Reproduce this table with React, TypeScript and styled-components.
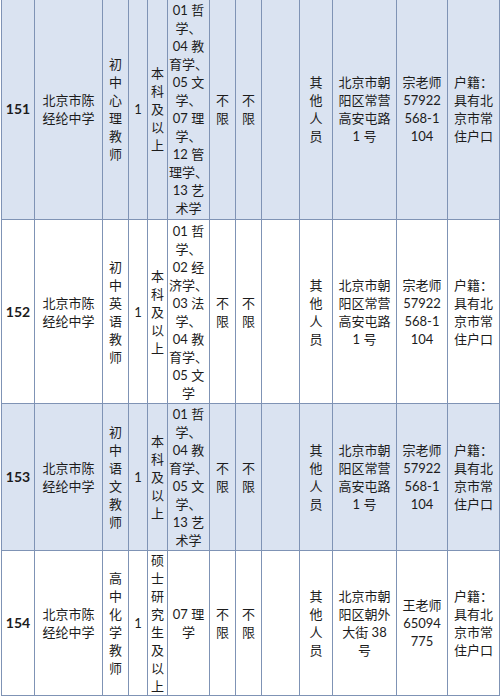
import React from 'react'
import styled, { createGlobalStyle } from 'styled-components'

const GlobalStyle = createGlobalStyle`
    html, body {
        margin: 0;
        padding: 0;
        background: #ffffff;
    }
`

interface RowData {
    no: string
    unit: string[]
    post: string
    count: string
    edu: string
    major: string[]
    address: string[]
    contact: string[]
    height: number
}

const rows: RowData[] = [
    {
        no: '151',
        unit: ['北京市陈', '经纶中学'],
        post: '初中心理教师',
        count: '1',
        edu: '本科及以上',
        major: ['01 哲', '学、', '04 教', '育学、', '05 文', '学、', '07 理', '学、', '12 管', '理学、', '13 艺', '术学'],
        address: ['北京市朝', '阳区常营', '高安屯路', '1 号'],
        contact: ['宗老师', '57922', '568-1', '104'],
        height: 221,
    },
    {
        no: '152',
        unit: ['北京市陈', '经纶中学'],
        post: '初中英语教师',
        count: '1',
        edu: '本科及以上',
        major: ['01 哲', '学、', '02 经', '济学、', '03 法', '学、', '04 教', '育学、', '05 文', '学'],
        address: ['北京市朝', '阳区常营', '高安屯路', '1 号'],
        contact: ['宗老师', '57922', '568-1', '104'],
        height: 184,
    },
    {
        no: '153',
        unit: ['北京市陈', '经纶中学'],
        post: '初中语文教师',
        count: '1',
        edu: '本科及以上',
        major: ['01 哲', '学、', '04 教', '育学、', '05 文', '学、', '13 艺', '术学'],
        address: ['北京市朝', '阳区常营', '高安屯路', '1 号'],
        contact: ['宗老师', '57922', '568-1', '104'],
        height: 147,
    },
    {
        no: '154',
        unit: ['北京市陈', '经纶中学'],
        post: '高中化学教师',
        count: '1',
        edu: '硕士研究生及以上',
        major: ['07 理', '学'],
        address: ['北京市朝', '阳区朝外', '大街 38', '号'],
        contact: ['王老师', '65094', '775'],
        height: 144,
    },
]

const widths = [33, 68, 26, 19, 20, 42, 26, 26, 38, 33, 64, 51, 52]

const Lines: React.FC<{ lines: string[] }> = ({ lines }) => (
    <>
        {lines.map((l, i) => (
            <Line key={i}>{l}</Line>
        ))}
    </>
)

const App: React.FC = () => {
    return (
        <Page>
            <GlobalStyle />
            <Table>
                <colgroup>
                    {widths.map((w, i) => (
                        <col key={i} style={{ width: w }} />
                    ))}
                </colgroup>
                <tbody>
                    {rows.map((r, i) => (
                        <Row key={r.no} $shaded={i % 2 === 0} style={{ height: r.height }}>
                            <NoCell>{r.no}</NoCell>
                            <Cell><Lines lines={r.unit} /></Cell>
                            <Cell><Lines lines={r.post.split('')} /></Cell>
                            <Cell>{r.count}</Cell>
                            <Cell><Lines lines={r.edu.split('')} /></Cell>
                            <Cell><Lines lines={r.major} /></Cell>
                            <Cell><Lines lines={['不', '限']} /></Cell>
                            <Cell><Lines lines={['不', '限']} /></Cell>
                            <Cell />
                            <Cell><Lines lines={['其', '他', '人', '员']} /></Cell>
                            <Cell><Lines lines={r.address} /></Cell>
                            <Cell><Lines lines={r.contact} /></Cell>
                            <Cell><Lines lines={['户籍：', '具有北', '京市常', '住户口']} /></Cell>
                        </Row>
                    ))}
                </tbody>
            </Table>
        </Page>
    )
}

const Page = styled.div`
    width: 500px;
    height: 697px;
    overflow: hidden;
    background: #ffffff;
    padding-left: 1px;
    box-sizing: border-box;
`

const Table = styled.table`
    width: 499px;
    margin-top: -2px;
    border-collapse: collapse;
    table-layout: fixed;
    font-family: Lato, "Noto Sans CJK SC", sans-serif;
    font-size: 13px;
    line-height: 18px;
    color: #1c1c1c;
`

const Row = styled.tr<{ $shaded: boolean }>`
    background: ${p => (p.$shaded ? '#dae3f1' : '#ffffff')};
`

const Cell = styled.td`
    border: 1px solid #7f93b5;
    padding: 0;
    text-align: center;
    vertical-align: middle;
    overflow: hidden;
`

const NoCell = styled(Cell)`
    font-weight: bold;
    font-size: 14px;
`

const Line = styled.div`
    white-space: nowrap;
`

export default App
